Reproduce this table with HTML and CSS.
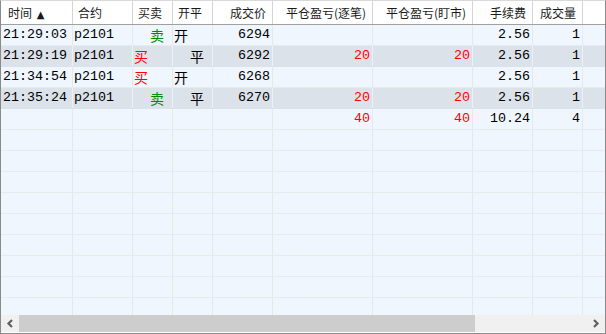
FILE: index.html
```html
<!DOCTYPE html>
<html>
<head>
<meta charset="utf-8">
<link rel="stylesheet" href="styles.css">
</head>
<body>
<div class="grid">
  <div class="hdr row">
    <div class="c l">时间 <span class="arrow">▲</span></div>
    <div class="c l">合约</div>
    <div class="c l">买卖</div>
    <div class="c l">开平</div>
    <div class="c r">成交价</div>
    <div class="c r">平仓盈亏(逐笔)</div>
    <div class="c r">平仓盈亏(盯市)</div>
    <div class="c r">手续费</div>
    <div class="c r">成交量</div>
    <div class="c f"></div>
  </div>
  <div class="body">
    <div class="row d a">
      <div class="c">21:29:03</div><div class="c">p2101</div><div class="c cjk sell"><span class="pad"></span>卖</div><div class="c cjk">开</div>
      <div class="c r">6294</div><div class="c r"></div><div class="c r"></div><div class="c r">2.56</div><div class="c r">1</div><div class="c f"></div>
    </div>
    <div class="row d b">
      <div class="c">21:29:19</div><div class="c">p2101</div><div class="c cjk buy">买</div><div class="c cjk"><span class="pad"></span>平</div>
      <div class="c r">6292</div><div class="c r red">20</div><div class="c r red">20</div><div class="c r">2.56</div><div class="c r">1</div><div class="c f"></div>
    </div>
    <div class="row d a">
      <div class="c">21:34:54</div><div class="c">p2101</div><div class="c cjk buy">买</div><div class="c cjk">开</div>
      <div class="c r">6268</div><div class="c r"></div><div class="c r"></div><div class="c r">2.56</div><div class="c r">1</div><div class="c f"></div>
    </div>
    <div class="row d b">
      <div class="c">21:35:24</div><div class="c">p2101</div><div class="c cjk sell"><span class="pad"></span>卖</div><div class="c cjk"><span class="pad"></span>平</div>
      <div class="c r">6270</div><div class="c r red">20</div><div class="c r red">20</div><div class="c r">2.56</div><div class="c r">1</div><div class="c f"></div>
    </div>
    <div class="row d a">
      <div class="c"></div><div class="c"></div><div class="c"></div><div class="c"></div>
      <div class="c r"></div><div class="c r red">40</div><div class="c r red">40</div><div class="c r">10.24</div><div class="c r">4</div><div class="c f"></div>
    </div>
    <div class="row d a"><div class="c"></div><div class="c"></div><div class="c"></div><div class="c"></div><div class="c"></div><div class="c"></div><div class="c"></div><div class="c"></div><div class="c"></div><div class="c f"></div></div>
    <div class="row d a"><div class="c"></div><div class="c"></div><div class="c"></div><div class="c"></div><div class="c"></div><div class="c"></div><div class="c"></div><div class="c"></div><div class="c"></div><div class="c f"></div></div>
    <div class="row d a"><div class="c"></div><div class="c"></div><div class="c"></div><div class="c"></div><div class="c"></div><div class="c"></div><div class="c"></div><div class="c"></div><div class="c"></div><div class="c f"></div></div>
    <div class="row d a"><div class="c"></div><div class="c"></div><div class="c"></div><div class="c"></div><div class="c"></div><div class="c"></div><div class="c"></div><div class="c"></div><div class="c"></div><div class="c f"></div></div>
    <div class="row d a"><div class="c"></div><div class="c"></div><div class="c"></div><div class="c"></div><div class="c"></div><div class="c"></div><div class="c"></div><div class="c"></div><div class="c"></div><div class="c f"></div></div>
    <div class="row d a"><div class="c"></div><div class="c"></div><div class="c"></div><div class="c"></div><div class="c"></div><div class="c"></div><div class="c"></div><div class="c"></div><div class="c"></div><div class="c f"></div></div>
    <div class="row d a"><div class="c"></div><div class="c"></div><div class="c"></div><div class="c"></div><div class="c"></div><div class="c"></div><div class="c"></div><div class="c"></div><div class="c"></div><div class="c f"></div></div>
    <div class="row d a"><div class="c"></div><div class="c"></div><div class="c"></div><div class="c"></div><div class="c"></div><div class="c"></div><div class="c"></div><div class="c"></div><div class="c"></div><div class="c f"></div></div>
    <div class="row d a"><div class="c"></div><div class="c"></div><div class="c"></div><div class="c"></div><div class="c"></div><div class="c"></div><div class="c"></div><div class="c"></div><div class="c"></div><div class="c f"></div></div>
  </div>
  <div class="hscroll">
    <div class="btn"><svg width="8" height="9" viewBox="0 0 8 9"><polyline points="6,1 2.5,4.5 6,8" fill="none" stroke="#606060" stroke-width="2.2"/></svg></div>
    <div class="thumb"></div>
    <div class="track"></div>
    <div class="btn"><svg width="8" height="9" viewBox="0 0 8 9"><polyline points="2,1 5.5,4.5 2,8" fill="none" stroke="#606060" stroke-width="2.2"/></svg></div>
  </div>
</div>
</body>
</html>
```

FILE: styles.css
```css
html, body {
  margin: 0;
  padding: 0;
  background: #ffffff;
}
.grid {
  width: 606px;
  height: 334px;
  box-sizing: border-box;
  border: 1px solid #8a8a8a;
  border-top-color: #d9d9d9;
  display: flex;
  flex-direction: column;
  background: #ffffff;
  overflow: hidden;
}
.row {
  display: grid;
  grid-template-columns: 72px 60px 40px 40px 60px 100px 100px 60px 50px 1fr;
}
.hdr {
  height: 23px;
  border-bottom: 1px solid #a0a0a0;
  background: #ffffff;
  font-family: "Noto Sans CJK SC", "Noto Sans", sans-serif;
  font-size: 12px;
  color: #1a1a1a;
}
.hdr .c {
  line-height: 23px;
  border-right: 1px solid #d5d5d5;
  padding: 0 6px 0 5px;
}
.hdr .c:first-child {
  padding-left: 7px;
}
.hdr .f {
  border-right: none;
}
.arrow {
  font-size: 10px;
  margin-left: 2px;
  font-family: "DejaVu Sans", sans-serif;
}
.c {
  box-sizing: border-box;
  border-right: 1px solid #e8e8e8;
  overflow: hidden;
  white-space: pre;
}
.l { text-align: left; }
.r { text-align: right; }
.body {
  flex: 1;
  overflow: hidden;
  background: #eff6fe;
}
.d {
  height: 21px;
  border-bottom: 1px solid #e8ebee;
  box-sizing: border-box;
  font-family: "Liberation Mono", "Noto Sans CJK SC", monospace;
  font-size: 13.33px;
  color: #000000;
}
.d .c {
  line-height: 20px;
  padding: 0 1px 0 1px;
}
.d .c:first-child {
  padding-left: 2px;
}
.d .r {
  padding-right: 2px;
}
.d .cjk {
  font-family: "Noto Sans CJK SC", sans-serif;
  font-size: 14px;
}
.pad {
  display: inline-block;
  width: 16px;
}
.a { background: #eff6fe; }
.b { background: #dce2ea; border-bottom-color: #dce2ea; }
.b .c { border-right-color: #edf1f5; }
.d .f { border-right: none; }
.sell { color: #008c00; }
.buy { color: #ff0000; }
.red { color: #ff0000; }
.hscroll {
  height: 17px;
  margin-bottom: 1px;
  display: flex;
  background: #f0f0f0;
}
.btn {
  width: 18px;
  display: flex;
  align-items: center;
  justify-content: center;
}
.thumb {
  width: 456px;
  background: #cdcdcd;
}
.track {
  flex: 1;
}
```
